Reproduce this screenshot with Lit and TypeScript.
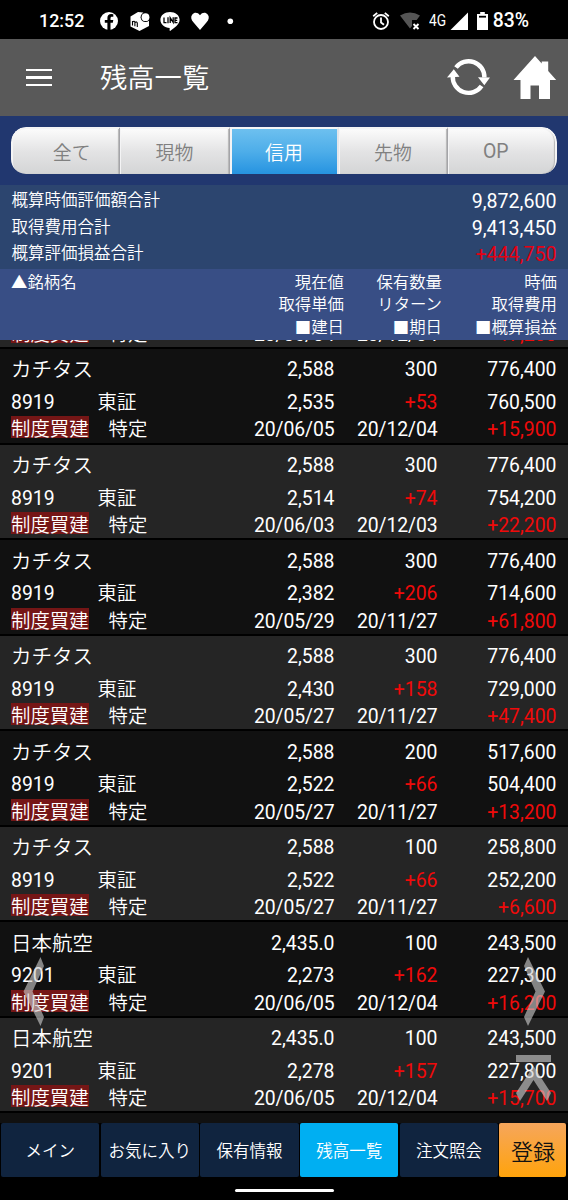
import { LitElement, html, css, svg } from "lit";
import { customElement, property } from "lit/decorators.js";
import { classMap } from "lit/directives/class-map.js";

interface Holding {
  name: string;
  code: string;
  price: string;
  cost: string;
  opened: string;
  qty: string;
  ret: string;
  due: string;
  value: string;
  total: string;
  gain: string;
}

const make = (
  name: string, code: string, price: string, qty: string, value: string,
  cost: string, ret: string, total: string, opened: string, due: string, gain: string,
): Holding => ({ name, code, price, cost, opened, qty, ret, due, value, total, gain });

const HOLDINGS: Holding[] = [
  make("カチタス", "8919", "2,588", "300", "776,400", "2,531", "+57", "759,300", "20/06/04", "20/12/04", "+17,200"),
  make("カチタス", "8919", "2,588", "300", "776,400", "2,535", "+53", "760,500", "20/06/05", "20/12/04", "+15,900"),
  make("カチタス", "8919", "2,588", "300", "776,400", "2,514", "+74", "754,200", "20/06/03", "20/12/03", "+22,200"),
  make("カチタス", "8919", "2,588", "300", "776,400", "2,382", "+206", "714,600", "20/05/29", "20/11/27", "+61,800"),
  make("カチタス", "8919", "2,588", "300", "776,400", "2,430", "+158", "729,000", "20/05/27", "20/11/27", "+47,400"),
  make("カチタス", "8919", "2,588", "200", "517,600", "2,522", "+66", "504,400", "20/05/27", "20/11/27", "+13,200"),
  make("カチタス", "8919", "2,588", "100", "258,800", "2,522", "+66", "252,200", "20/05/27", "20/11/27", "+6,600"),
  make("日本航空", "9201", "2,435.0", "100", "243,500", "2,273", "+162", "227,300", "20/06/05", "20/12/04", "+16,200"),
  make("日本航空", "9201", "2,435.0", "100", "243,500", "2,278", "+157", "227,800", "20/06/05", "20/12/04", "+15,700"),
];

@customElement("status-bar")
export class StatusBar extends LitElement {
  static styles = css`
    :host { display: block; }
    .bar { display: flex; justify-content: space-between; height: 39px; background: #000; color: #fff; }
    .side { display: flex; align-items: center; padding-top: 2px; }
    .left { padding-left: 39px; }
    .right { padding-right: 39px; }
    .clock { font: 500 17.9px/38px Roboto, sans-serif; width: 61px; }
    .apps { display: block; margin-top: -2px; }
    .net { font: 400 16px/38px Roboto, sans-serif; transform: scaleX(.86); transform-origin: left; width: 21px; }
    .pct { font: 500 19.4px/38px Roboto, sans-serif; margin-left: 5px; }
  `;
  render() {
    return html`<div class="bar">
      <div class="side left">
        <span class="clock">12:52</span>
        <svg class="apps" width="140" height="38" viewBox="100 0 140 38">
          <circle cx="109" cy="20" r="9" fill="#fff" />
          <path d="M107.4 29v-7.2h-2.6v-2.9h2.6v-1.8c0-2.7 1.5-4 3.8-4l2.1.2v2.5h-1.3c-1.1 0-1.5.7-1.5 1.5v1.6h2.8l-.5 2.9h-2.3V29z" fill="#000" />
          <path d="M130.5 15.5l7.5-4.5 5 .5 6 6.5v7l-9.5 5-9-4.5z" fill="#fff" />
          <circle cx="145.5" cy="16.2" r="4.9" fill="#000" />
          <circle cx="145.5" cy="16.2" r="3.9" fill="#fff" />
          <path d="M132.5 24.5v-4.5m0 1q2-1.6 2.4.4v3.8m0-3.6q2-1.6 2.4.5v3.8" fill="none" stroke="#000" stroke-width="1.1" />
          <path d="M170 11c5.3 0 9.6 3.4 9.6 7.7 0 4.6-5.2 8.2-9.5 11.3-.5.1-.6-.6-.4-2.9-5.1-.4-9.3-3.8-9.3-8.4 0-4.3 4.3-7.7 9.6-7.7z" fill="#fff" />
          <path d="M164 16.5v5.200h2.500M168 16.200v6M170.200 22v-5.200l3 4.600V16.200M177.500 17H175v4.700h2.500M175 19.300h2.200" fill="none" stroke="#000" stroke-width="1.3" />
          <path d="M200 29l-6.4-7.4c-2.6-3-3.2-6-1.3-8.2 2.2-2.5 5.7-2 7.7.8 2-2.800 5.500-3.300 7.700-.8 1.900 2.200 1.300 5.200-1.300 8.200z" fill="#fff" />
          <circle cx="230.3" cy="20.3" r="2.8" fill="#fff" />
        </svg>
      </div>
      <div class="side right">
        <svg class="apps" width="58" height="38" viewBox="371 0 58 38">
          <g fill="none" stroke="#fff" stroke-width="1.8">
            <circle cx="381" cy="21" r="7" />
            <path d="M381 16.5v5l3 2.3M373.2 15.2l4-3.3M388.8 15.2l-4-3.3" />
          </g>
          <path d="M400 14.4q10-5.8 20 0L416.7 19H412v6l-2 2.5z" fill="#555" />
          <path d="M413.5 23l5 5m0-5l-5 5" stroke="#fff" stroke-width="1.9" />
        </svg>
        <span class="net">4G</span>
        <svg class="apps" width="38" height="38" viewBox="448 0 38 38">
          <path d="M448.5 29L466 11.5V29zM475 13h3.2v-2h4.6v2h3.2v16h-11z" fill="#fff" />
          <path d="M477 14.8h7v1.8h-7z" fill="#000" />
        </svg>
        <span class="pct">83%</span>
      </div>
    </div>`;
  }
}

@customElement("title-bar")
export class TitleBar extends LitElement {
  static styles = css`
    :host { display: block; }
    .bar { display: flex; align-items: center; height: 77px; background: #595959; color: #fff; padding: 0 11px 0 26px; }
    .burger { display: grid; gap: 5px; width: 26px; }
    .line { height: 2.6px; background: #fff; }
    .title { flex: 1; margin: 0 0 4px 48px; font: 350 27.3px/40px "Noto Sans CJK JP", sans-serif; }
    .icons { display: block; }
  `;
  render() {
    return html`<div class="bar">
      <div class="burger"><div class="line"></div><div class="line"></div><div class="line"></div></div>
      <div class="title">残高一覧</div>
      <svg class="icons" width="111" height="77" viewBox="446 39 111 77">
        <g fill="none" stroke="#fff" stroke-width="4.4">
          <path d="M456 67.5A15.8 15.8 0 0 1 484.4 77.5" />
          <path d="M481.6 86A15.8 15.8 0 0 1 452.8 76" />
        </g>
        <path d="M478 77.200l12 .3-5.700 7.800zM447 77.500l6.800-8.300 5.700 7.600z" fill="#fff" />
        <path d="M513.5 80L535 56l6.7 7.5V61.5h6.5v9.500l8 9H550v19h-11V85.500h-8.500V99h-10V80z" fill="#fff" />
      </svg>
    </div>`;
  }
}

@customElement("segment-tabs")
export class SegmentTabs extends LitElement {
  static styles = css`
    :host { display: block; }
    .wrap { height: 58px; padding: 11px 11px 0; background: #21376f; }
    .strip { display: grid; grid-template-columns: 108.5px 110px 109px 109px 109.5px; height: 47px; border-radius: 15px; overflow: hidden; }
    .tab {
      box-sizing: border-box; border: 2px solid #f4f4f5; border-left-width: 1px; border-right: 1px solid #a4a4a8;
      background: linear-gradient(#fbfbfb, #e3e3e4 50%, #d3d4d5);
      color: #808080; text-align: center; padding-left: 12px;
      font: 350 18.9px/46px "Noto Sans CJK JP", sans-serif;
      box-shadow: inset -1px -1px 1px #b5b5b5;
    }
    .first { border-radius: 15px 0 0 15px; border-left-width: 2px; }
    .last { border-radius: 0 15px 15px 0; border-right: 2px solid #f4f4f5; padding-left: 0; padding-right: 12px; font: 400 19.4px/45px Roboto, sans-serif; }
    .mid { padding-left: 0; }
    .active { background: linear-gradient(#6dc0ef, #4dade9 50%, #2492e0); background-clip: padding-box; color: #fff; box-shadow: none; border-left-width: 2px; border-right: 2px solid #e4e6ea; }
  `;
  render() {
    const tabs = ["全て", "現物", "信用", "先物", "OP"];
    return html`<div class="wrap"><div class="strip">
      ${tabs.map((t, i) => html`<div class=${classMap({ tab: true, first: i === 0, mid: i > 0 && i < 4, last: i === 4, active: i === 2 })}>${t}</div>`)}
    </div></div>`;
  }
}

@customElement("balance-summary")
export class BalanceSummary extends LitElement {
  static styles = css`
    :host { display: block; }
    .sum { height: 84px; box-sizing: border-box; background: #2c456f; padding: 2px 11.5px 0; color: #fff; }
    .row { display: flex; justify-content: space-between; height: 26.5px; }
    .label { font: 350 16.5px/25px "Noto Sans CJK JP", sans-serif; }
    .num { font: 400 19.6px/30px Roboto, sans-serif; }
    .up { color: #e60012; }
    .head {
      height: 71px; box-sizing: border-box; background: #384e85; color: #fff; padding-top: 1px;
      display: grid; grid-template-columns: 200px 144px 98px 115px;
      font: 350 16.4px/22.4px "Noto Sans CJK JP", sans-serif; text-align: right; white-space: nowrap;
    }
    .name { text-align: left; padding-left: 11px; }
  `;
  render() {
    return html`
      <div class="sum">
        <div class="row"><span class="label">概算時価評価額合計</span><span class="num">9,872,600</span></div>
        <div class="row"><span class="label">取得費用合計</span><span class="num">9,413,450</span></div>
        <div class="row"><span class="label">概算評価損益合計</span><span class="num up">+444,750</span></div>
      </div>
      <div class="head">
        <div class="name">▲銘柄名</div>
        <div><div>現在値</div><div>取得単価</div><div>■建日</div></div>
        <div><div>保有数量</div><div>リターン</div><div>■期日</div></div>
        <div><div>時価</div><div>取得費用</div><div>■概算損益</div></div>
      </div>`;
  }
}

@customElement("holding-row")
export class HoldingRow extends LitElement {
  @property({ attribute: false }) item!: Holding;
  @property({ type: Boolean }) dark = false;
  static styles = css`
    :host { display: block; }
    .row {
      height: 95.57px; box-sizing: border-box; border-bottom: 2px solid #000; background: #252525; color: #fff;
      padding: 9.5px 0 0 11px; display: grid;
      grid-template-columns: 86.5px 100px 137px 103px 119px; grid-template-rows: 32.5px 27.5px 24px;
      font: 400 19.4px/24px Roboto, sans-serif; white-space: nowrap;
    }
    .dark { background: #111; }
    .jp { font-family: "Noto Sans CJK JP", sans-serif; font-weight: 350; line-height: 20px; }
    .name { grid-column: 1 / 3; font-size: 20.5px; }
    .n { text-align: right; }
    .date { letter-spacing: -.1px; }
    .up { color: #f00a0a; }
    .kind { grid-column: 1 / 3; display: flex; gap: 20px; }
    .tag { background: #751616; height: 22px; margin-top: -2px; line-height: 24px; }
  `;
  render() {
    const h = this.item;
    return html`<div class=${classMap({ row: true, dark: this.dark })}>
      <div class="name jp">${h.name}</div><div class="n">${h.price}</div><div class="n">${h.qty}</div><div class="n">${h.value}</div>
      <div>${h.code}</div><div class="jp">東証</div><div class="n">${h.cost}</div><div class="n up">${h.ret}</div><div class="n">${h.total}</div>
      <div class="kind jp"><span class="tag">制度買建</span><span>特定</span></div><div class="n date">${h.opened}</div><div class="n date">${h.due}</div><div class="n up">${h.gain}</div>
    </div>`;
  }
}

@customElement("bottom-nav")
export class BottomNav extends LitElement {
  static styles = css`
    :host { display: block; }
    .nav { display: grid; grid-template-columns: repeat(5, 98.3px) 67px; gap: 1.4px; padding: 0 1px; height: 54px; }
    .item { background: #10243f; border-radius: 2px; color: #fff; text-align: center; font: 350 16.5px/54px "Noto Sans CJK JP", sans-serif; white-space: nowrap; }
    .active { background: #00aff2; }
    .reg { background: linear-gradient(#f6a65c, #ffa30c); color: #111; font-size: 22px; }
    .home { height: 23px; display: flex; justify-content: center; align-items: center; padding-top: 3px; box-sizing: border-box; }
    .pill { width: 99px; height: 3.5px; border-radius: 2px; background: #fff; }
  `;
  render() {
    const items = ["メイン", "お気に入り", "保有情報", "残高一覧", "注文照会", "登録"];
    return html`<div class="nav">
      ${items.map((t, i) => html`<div class=${classMap({ item: true, active: i === 3, reg: i === 5 })}>${t}</div>`)}
    </div><div class="home"><div class="pill"></div></div>`;
  }
}

@customElement("app-root")
export class AppRoot extends LitElement {
  static styles = css`
    :host { display: block; width: 568px; height: 1200px; background: #000; overflow: hidden; position: relative; }
    .list { height: 783.4px; overflow: hidden; background: #111; }
    .scroll { margin-top: -86.6px; }
    .arrows { position: absolute; left: 0; top: 940px; pointer-events: none; }
  `;
  render() {
    return html`
      <status-bar></status-bar>
      <title-bar></title-bar>
      <segment-tabs></segment-tabs>
      <balance-summary></balance-summary>
      <div class="list"><div class="scroll">
        ${HOLDINGS.map((h, i) => html`<holding-row .item=${h} ?dark=${i % 2 === 1}></holding-row>`)}
      </div></div>
      <bottom-nav></bottom-nav>
      <svg class="arrows" width="568" height="180" viewBox="0 940 568 180">
        ${svg`<g fill="#ccc" fill-opacity=".62">
          <path d="M40.5 957L44 966 32.5 991.5 44 1017 40.5 1026 23.5 991.5z" />
          <path d="M528 957L524 966 535.5 991.5 524 1017 528 1026 545 991.5z" />
          <path d="M516 1055h35v7h-35z" />
          <path d="M533.5 1066L551 1093 547 1101 533.5 1080 520 1101 516 1093z" />
        </g>`}
      </svg>`;
  }
}
